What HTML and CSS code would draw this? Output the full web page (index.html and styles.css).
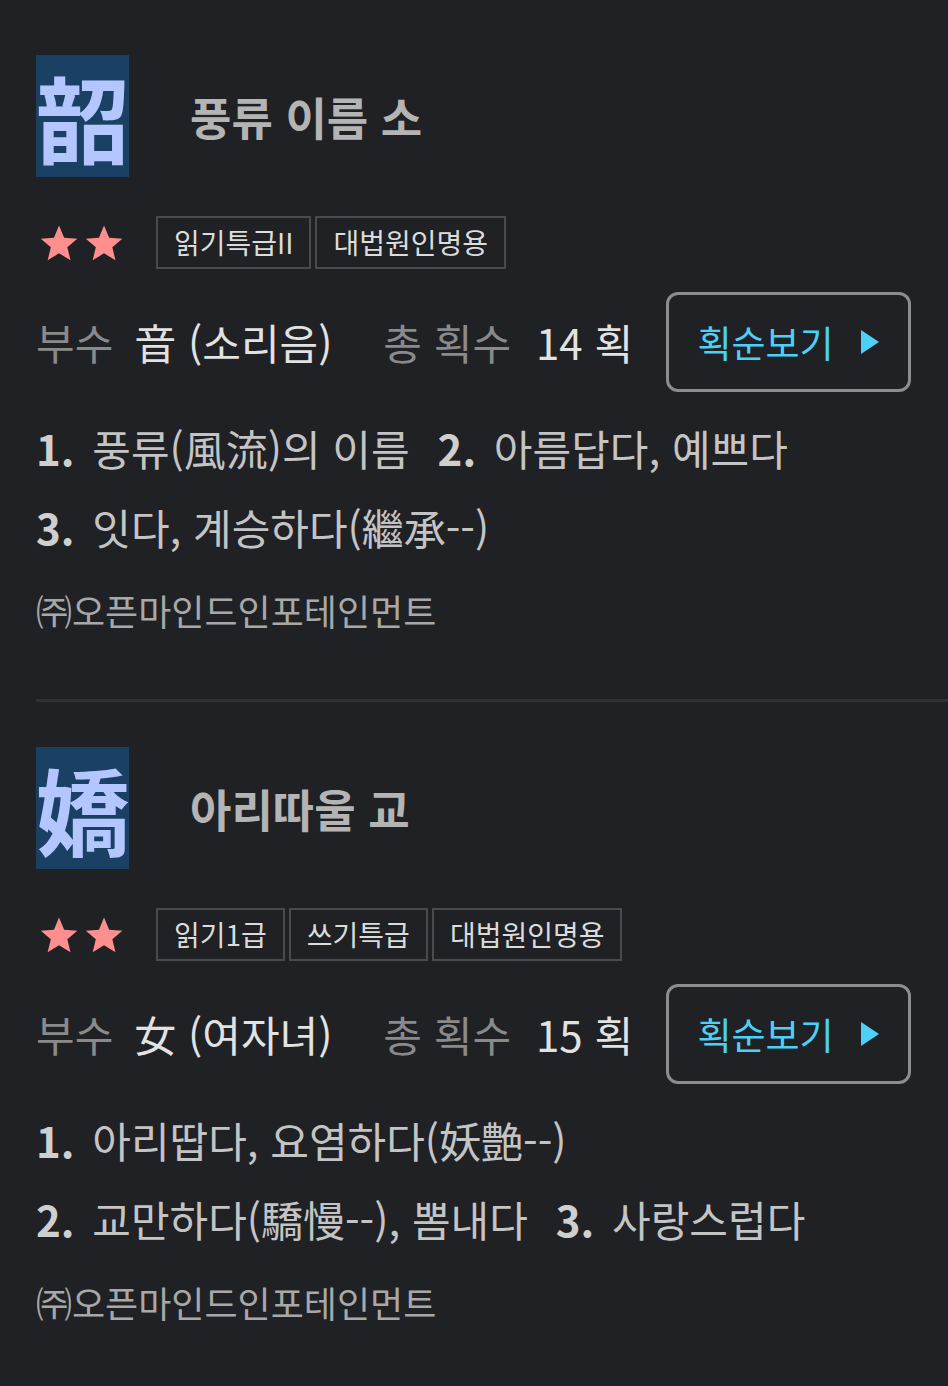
FILE: index.html
```html
<!DOCTYPE html>
<html lang="ko">
<head>
<meta charset="utf-8">
<link rel="stylesheet" href="styles.css">
</head>
<body>
<div class="page">
  <section class="entry first">
    <div class="head">
      <div class="hanja">韶</div>
      <div class="meaning">풍류 이름 소</div>
    </div>
    <div class="tags">
      <div class="stars">
        <svg class="star" viewBox="0 0 24 24"><path d="M12 1.5l3.1 7.3 7.9.6-6 5.2 1.9 7.7L12 18.2l-6.8 4.1 1.9-7.7-6-5.2 7.9-.6z"/></svg>
        <svg class="star" viewBox="0 0 24 24"><path d="M12 1.5l3.1 7.3 7.9.6-6 5.2 1.9 7.7L12 18.2l-6.8 4.1 1.9-7.7-6-5.2 7.9-.6z"/></svg>
      </div>
      <div class="badges">
        <span class="badge">읽기특급II</span>
        <span class="badge">대법원인명용</span>
      </div>
    </div>
    <div class="info">
      <span class="label">부수</span>
      <span class="val">音 (소리음)</span>
      <span class="label second">총 획수</span>
      <span class="val">14 획</span>
      <a class="btn">획순보기<svg class="tri" viewBox="0 0 20 26"><path d="M1 1L19 13 1 25z"/></svg></a>
    </div>
    <div class="defs">
      <span class="def"><b>1.</b> 풍류(風流)의 이름</span>
      <span class="def"><b>2.</b> 아름답다, 예쁘다</span>
      <span class="def"><b>3.</b> 잇다, 계승하다(繼承--)</span>
    </div>
    <div class="copy">㈜오픈마인드인포테인먼트</div>
  </section>
  <div class="divider"></div>
  <section class="entry">
    <div class="head">
      <div class="hanja">嬌</div>
      <div class="meaning">아리따울 교</div>
    </div>
    <div class="tags">
      <div class="stars">
        <svg class="star" viewBox="0 0 24 24"><path d="M12 1.5l3.1 7.3 7.9.6-6 5.2 1.9 7.7L12 18.2l-6.8 4.1 1.9-7.7-6-5.2 7.9-.6z"/></svg>
        <svg class="star" viewBox="0 0 24 24"><path d="M12 1.5l3.1 7.3 7.9.6-6 5.2 1.9 7.7L12 18.2l-6.8 4.1 1.9-7.7-6-5.2 7.9-.6z"/></svg>
      </div>
      <div class="badges">
        <span class="badge">읽기1급</span>
        <span class="badge">쓰기특급</span>
        <span class="badge">대법원인명용</span>
      </div>
    </div>
    <div class="info">
      <span class="label">부수</span>
      <span class="val">女 (여자녀)</span>
      <span class="label second">총 획수</span>
      <span class="val">15 획</span>
      <a class="btn">획순보기<svg class="tri" viewBox="0 0 20 26"><path d="M1 1L19 13 1 25z"/></svg></a>
    </div>
    <div class="defs">
      <span class="def"><b>1.</b> 아리땁다, 요염하다(妖艶--)</span>
      <span class="def"><b>2.</b> 교만하다(驕慢--), 뽐내다</span>
      <span class="def"><b>3.</b> 사랑스럽다</span>
    </div>
    <div class="copy">㈜오픈마인드인포테인먼트</div>
  </section>
</div>
</body>
</html>
```

FILE: styles.css
```css
html, body {
  margin: 0;
  padding: 0;
  background: #1f2125;
}
body {
  font-family: "Noto Sans CJK KR", "Noto Sans", sans-serif;
  color: #c4c4c4;
  width: 948px;
  min-height: 1386px;
}
.page {
  padding-top: 55px;
}
.entry {
  padding-left: 36px;
}
.head {
  display: flex;
  align-items: center;
}
.hanja {
  width: 93px;
  height: 122px;
  background: #1a4164;
  color: #b3c6ff;
  font-size: 94px;
  font-weight: 700;
  line-height: 122px;
  text-align: center;
  font-family: "Noto Sans CJK KR", sans-serif;
}
.meaning {
  margin-left: 61px;
  font-size: 45px;
  font-weight: 700;
  color: #b4b4b4;
  line-height: 1;
}
.tags {
  display: flex;
  align-items: center;
  margin-top: 39px;
}
.stars {
  display: flex;
  gap: 5px;
  margin-left: 3px;
}
.star {
  width: 40px;
  height: 40px;
  fill: #ff8e8e;
}
.badges {
  display: flex;
  gap: 4px;
  margin-left: 32px;
}
.badge {
  border: 2px solid #4b4b4d;
  padding: 7px 16px;
  font-size: 28px;
  line-height: 35px;
  color: #dcdcdc;
}
.info {
  display: flex;
  align-items: center;
  margin-top: 23px;
  font-size: 42px;
  line-height: 1;
}
.label {
  color: #8a8a8a;
  margin-right: 21px;
}
.label.second {
  margin-left: 51px;
  margin-right: 25px;
}
.val {
  color: #e2e2e2;
  font-weight: 400;
}
.btn {
  margin-left: 33px;
  box-sizing: border-box;
  width: 245px;
  height: 100px;
  border: 3px solid #8d8d8f;
  border-radius: 12px;
  display: flex;
  align-items: center;
  justify-content: center;
  color: #4cd0f8;
  font-size: 37px;
}
.tri {
  width: 20px;
  height: 26px;
  margin-left: 26px;
  fill: #4cd0f8;
}
.defs {
  margin-top: 16px;
  font-size: 42px;
  line-height: 79px;
  color: #c4c4c4;
  width: 880px;
  display: flex;
  flex-wrap: wrap;
  column-gap: 28px;
}
.def {
  white-space: nowrap;
}
.def b {
  color: #cfcfcf;
  font-weight: 700;
  margin-right: 6px;
}
.copy {
  margin-top: 22px;
  font-size: 36px;
  line-height: 44px;
  color: #a8a8a8;
}
.divider {
  margin: 67px 0 45px 36px;
  height: 3px;
  background: #2e3234;
}
```
